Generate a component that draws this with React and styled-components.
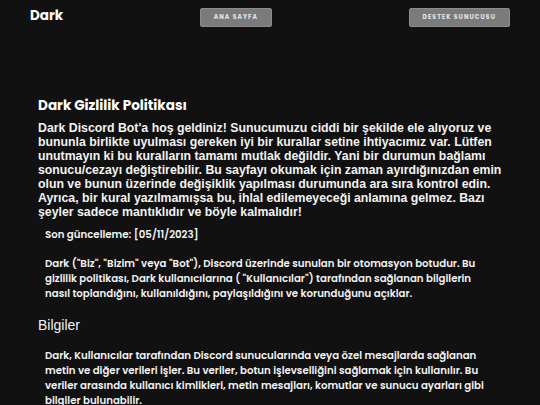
import React from "react";
import styled, { createGlobalStyle } from "styled-components";

const GlobalStyle = createGlobalStyle`
  html, body {
    margin: 0;
    padding: 0;
    background: #111111;
    color: #f2f2f2;
  }
  * {
    box-sizing: border-box;
  }
`;

const geo = `"Poppins", "Noto Sans", "DejaVu Sans", sans-serif`;

const App = () => {
  return (
    <Page>
      <GlobalStyle />
      <Nav>
        <Logo>Dark</Logo>
        <NavButton>ANA SAYFA</NavButton>
        <NavButton>DESTEK SUNUCUSU</NavButton>
      </Nav>
      <Main>
        <Title>Dark Gizlilik Politikası</Title>
        <Intro>
          Dark Discord Bot'a hoş geldiniz! Sunucumuzu ciddi bir şekilde ele
          alıyoruz ve bununla birlikte uyulması gereken iyi bir kurallar setine
          ihtiyacımız var. Lütfen unutmayın ki bu kuralların tamamı mutlak
          değildir. Yani bir durumun bağlamı sonucu/cezayı değiştirebilir. Bu
          sayfayı okumak için zaman ayırdığınızdan emin olun ve bunun üzerinde
          değişiklik yapılması durumunda ara sıra kontrol edin. Ayrıca, bir
          kural yazılmamışsa bu, ihlal edilemeyeceği anlamına gelmez. Bazı
          şeyler sadece mantıklıdır ve böyle kalmalıdır!
        </Intro>
        <Updated>Son güncelleme: [05/11/2023]</Updated>
        <Text>
          Dark ("Biz", "Bizim" veya "Bot"), Discord üzerinde sunulan bir
          otomasyon botudur. Bu gizlilik politikası, Dark kullanıcılarına (
          "Kullanıcılar") tarafından sağlanan bilgilerin nasıl toplandığını,
          kullanıldığını, paylaşıldığını ve korunduğunu açıklar.
        </Text>
        <Section>Bilgiler</Section>
        <Text>
          Dark, Kullanıcılar tarafından Discord sunucularında veya özel
          mesajlarda sağlanan metin ve diğer verileri işler. Bu veriler, botun
          işlevselliğini sağlamak için kullanılır. Bu veriler arasında
          kullanıcı kimlikleri, metin mesajları, komutlar ve sunucu ayarları
          gibi bilgiler bulunabilir.
        </Text>
      </Main>
    </Page>
  );
};

export default App;

const Page = styled.div`
  min-height: 405px;
  background: #111111;
`;

const Nav = styled.header`
  height: 34px;
  padding: 0 30px;
  display: flex;
  align-items: center;
  justify-content: space-between;
`;

const Logo = styled.span`
  font-family: ${geo};
  font-weight: 700;
  font-size: 13.5px;
  color: #ffffff;
  margin-top: -2px;
`;

const NavButton = styled.button`
  height: 19px;
  padding: 0 13px;
  background: #7b7b7b;
  border: 1px solid #8c8c8c;
  border-radius: 2px;
  color: #e6e6e6;
  font-family: ${geo};
  font-weight: 700;
  font-size: 6px;
  letter-spacing: 1.1px;
  cursor: pointer;
`;

const Main = styled.main`
  padding: 63px 38px 0 38px;
  max-width: 540px;
`;

const Title = styled.h1`
  margin: 0 0 6px 0;
  font-family: ${geo};
  font-weight: 700;
  font-size: 13.6px;
  line-height: 18px;
  color: #ffffff;
`;

const Intro = styled.p`
  margin: 0;
  font-family: "Liberation Sans", Arial, sans-serif;
  font-weight: 700;
  font-size: 12.3px;
  line-height: 14px;
  color: #f2f2f2;
`;

const Updated = styled.p`
  margin: 8px 0 0 7px;
  font-family: ${geo};
  font-weight: 600;
  font-size: 10.2px;
  line-height: 15px;
  color: #f2f2f2;
`;

const Text = styled.p`
  margin: 14px 10px 0 7px;
  font-family: ${geo};
  font-weight: 600;
  font-size: 10.2px;
  line-height: 15px;
  color: #f2f2f2;
`;

const Section = styled.h2`
  margin: 15px 0 0 0;
  font-family: "Liberation Sans", Arial, sans-serif;
  font-weight: 400;
  font-size: 14px;
  line-height: 18px;
  color: #f2f2f2;
`;
